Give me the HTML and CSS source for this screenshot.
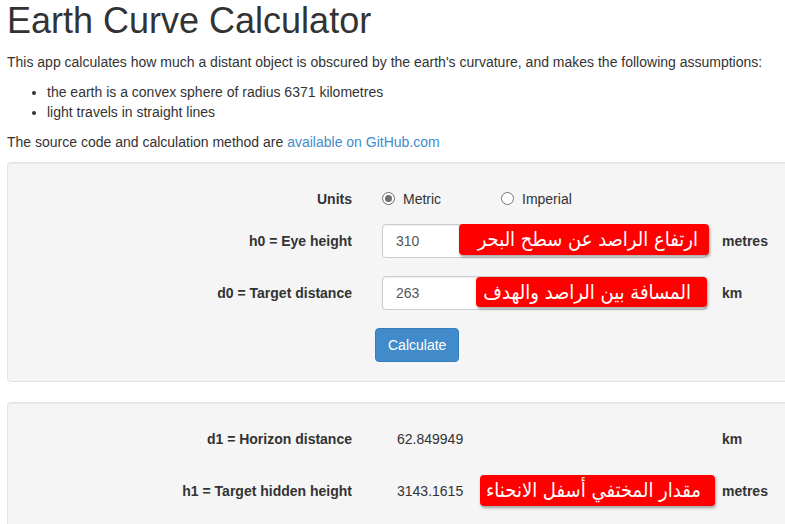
FILE: index.html
```html
<!DOCTYPE html>
<html lang="en">
<head>
<meta charset="utf-8">
<title>Earth Curve Calculator</title>
<link rel="stylesheet" href="styles.css">
</head>
<body>
<div class="page">
  <h1 class="title">Earth Curve Calculator</h1>
  <p class="text">This app calculates how much a distant object is obscured by the earth's curvature, and makes the following assumptions:</p>
  <ul class="list">
    <li>the earth is a convex sphere of radius 6371 kilometres</li>
    <li>light travels in straight lines</li>
  </ul>
  <p class="text">The source code and calculation method are <a class="link" href="#">available on GitHub.com</a></p>

  <div class="well">
    <div class="row row-units">
      <div class="label">Units</div>
      <div class="control radios">
        <label class="radio"><span class="dot checked"></span>Metric</label>
        <label class="radio"><span class="dot"></span>Imperial</label>
      </div>
    </div>
    <div class="row">
      <div class="label">h0 = Eye height</div>
      <div class="control">
        <div class="input">310</div>
        <div class="note note-h0" dir="rtl">ارتفاع الراصد عن سطح البحر</div>
      </div>
      <div class="unit">metres</div>
    </div>
    <div class="row">
      <div class="label">d0 = Target distance</div>
      <div class="control">
        <div class="input">263</div>
        <div class="note note-d0" dir="rtl">المسافة بين الراصد والهدف</div>
      </div>
      <div class="unit">km</div>
    </div>
    <div class="row row-last">
      <div class="label"></div>
      <div class="control">
        <button class="btn" type="button">Calculate</button>
      </div>
    </div>
  </div>

  <div class="well well-results">
    <div class="row">
      <div class="label">d1 = Horizon distance</div>
      <div class="control"><span class="value">62.849949</span></div>
      <div class="unit">km</div>
    </div>
    <div class="row">
      <div class="label">h1 = Target hidden height</div>
      <div class="control">
        <span class="value">3143.1615</span>
        <div class="note note-h1" dir="rtl">مقدار المختفي أسفل الانحناء</div>
      </div>
      <div class="unit">metres</div>
    </div>
  </div>
</div>
</body>
</html>
```
FILE: styles.css
```css
html, body {
  margin: 0;
  padding: 0;
  overflow: hidden;
  background: #fff;
}
body {
  font-family: "Liberation Sans", Arial, Helvetica, sans-serif;
  font-size: 14px;
  line-height: 20px;
  color: #333;
}
.page {
  padding-left: 7px;
  width: 900px;
}
.title {
  font-size: 36px;
  font-weight: normal;
  line-height: 39.6px;
  margin: 1px 0 11px;
  color: #333;
}
.text {
  margin: 0 0 10px;
}
.list {
  margin: 0 0 10px;
  padding-left: 40px;
}
.link {
  color: #428bca;
  text-decoration: none;
}
.well {
  width: 822px;
  padding: 19px;
  background: #f5f5f5;
  border: 1px solid #e3e3e3;
  border-radius: 4px;
  box-shadow: inset 0 1px 1px rgba(0,0,0,0.05);
  margin-bottom: 20px;
}
.well-results {
  padding-top: 19px;
  min-height: 200px;
}
.row {
  display: flex;
  align-items: center;
  height: 34px;
  margin-bottom: 18px;
}
.row-units {
  height: 27px;
  margin-bottom: 15px;
  align-items: flex-start;
}
.row-units .label {
  padding-top: 7px;
}
.row-last {
  margin-bottom: 0;
}
.label {
  width: 325px;
  margin-right: 30px;
  text-align: right;
  font-weight: bold;
}
.control {
  position: relative;
  width: 325px;
  height: 34px;
  display: flex;
  align-items: center;
}
.radios {
  height: 27px;
  padding-top: 7px;
  box-sizing: border-box;
  align-items: flex-start;
}
.radio {
  display: flex;
  align-items: center;
  width: 119px;
  height: 20px;
}
.dot {
  box-sizing: border-box;
  width: 13px;
  height: 13px;
  border: 1px solid #767676;
  border-radius: 50%;
  background: #fff;
  margin-right: 8px;
  position: relative;
}
.dot.checked {
  border-color: #6e6e6e;
}
.dot.checked::after {
  content: "";
  position: absolute;
  left: 2px;
  top: 2px;
  width: 7px;
  height: 7px;
  border-radius: 50%;
  background: #6e6e6e;
}
.input {
  box-sizing: border-box;
  width: 325px;
  height: 34px;
  padding: 6px 13px;
  background: #fff;
  border: 1px solid #ccc;
  border-radius: 4px;
  box-shadow: inset 0 1px 1px rgba(0,0,0,0.075);
  color: #555;
  line-height: 20px;
}
.unit {
  margin-left: 15px;
  font-weight: bold;
}
.btn {
  margin-left: -7px;
  height: 34px;
  width: 84px;
  padding: 6px 12px;
  font-family: "Liberation Sans", Arial, sans-serif;
  font-size: 14px;
  line-height: 20px;
  color: #fff;
  background: #428bca;
  border: 1px solid #357ebd;
  border-radius: 4px;
}
.value {
  padding-left: 15px;
}
.note {
  position: absolute;
  box-sizing: border-box;
  background: #ff0000;
  color: #fff;
  border-radius: 4px;
  box-shadow: 1px 2px 3px rgba(0,0,0,0.35);
  font-family: "DejaVu Sans Condensed", "DejaVu Sans", sans-serif;
  font-size: 20px;
  line-height: 30px;
  padding-right: 11px;
  text-align: right;
  white-space: nowrap;
  overflow: hidden;
}
.note-h0 {
  left: 77px;
  top: 0;
  width: 250px;
  height: 31px;
}
.note-d0 {
  left: 94px;
  top: 1px;
  width: 231px;
  height: 30px;
  padding-right: 16px;
}
.note-h1 {
  left: 98px;
  top: 1px;
  width: 235px;
  height: 31px;
  padding-right: 14px;
}
```
